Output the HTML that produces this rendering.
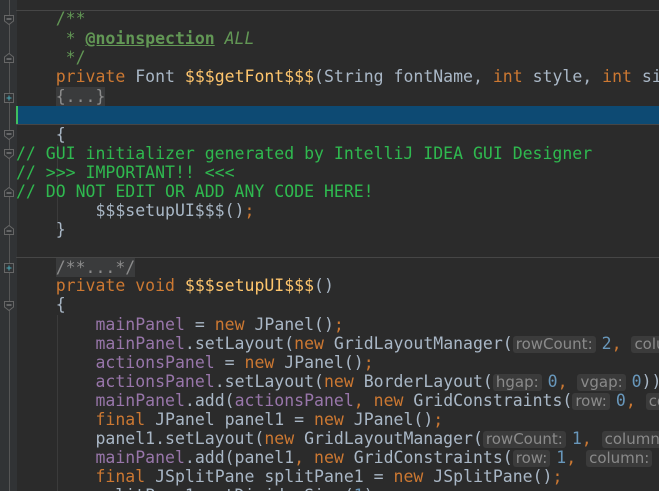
<!DOCTYPE html>
<html style="overflow:hidden;width:659px;height:491px"><head><meta charset="utf-8"><style>
body{margin:0;width:659px;height:491px;overflow:hidden;background:#2b2b2b;position:relative;font-family:"DejaVu Sans Mono","Liberation Mono",monospace;font-size:16.5px;color:#a9b7c6}
.g{position:absolute;left:0;top:0;width:17px;height:491px;background:#313335}
.vl{position:absolute;left:9px;top:0;width:1px;height:491px;background:#555}
.sep{position:absolute;left:16px;right:0;height:1px;background:#464646}
.l{position:absolute;left:16px;right:0;overflow:hidden;height:19px;line-height:19px;white-space:pre}
.k{color:#cc7832}.d{color:#629755}.dt{color:#629755;font-weight:bold;text-decoration:underline}.di{color:#629755;font-style:italic}
.c{color:#2fb94f}.m{color:#ffc66d}.f{color:#9876aa}.n{color:#6897bb}
.fo{background:#3a3b3c;color:#8c8c8c}
.h{display:inline-block;font-family:"DejaVu Sans","Liberation Sans",sans-serif;font-size:15px;line-height:17px;background:#3b3b3b;color:#8a8a8a;border-radius:3px;padding:0 3px;margin-right:6px}
.fm{position:absolute;left:4px;width:10px;height:10px}
</style></head><body>
<div class="g"></div><div class="vl"></div>
<div class="sep" style="top:10px"></div>
<div style="position:absolute;left:17px;right:0;top:106px;height:18px;background:#0d4a73"></div>
<div style="position:absolute;left:16px;top:106px;width:2px;height:18px;background:#3fbf5f"></div>
<div class="sep" style="top:124px"></div>
<div class="sep" style="top:257px"></div>

<svg class="fm" style="top:15px" viewBox="0 0 10 10"><path d="M0.5 0.5H9.5V6L5 9.5L0.5 6Z" fill="#313335" stroke="#666"/><path d="M2.5 4H7.5" stroke="#999"/></svg>
<svg class="fm" style="top:53px" viewBox="0 0 10 10"><path d="M0.5 9.5H9.5V4L5 0.5L0.5 4Z" fill="#313335" stroke="#666"/><path d="M2.5 6H7.5" stroke="#999"/></svg>
<svg class="fm" style="top:93px" viewBox="0 0 10 10"><rect x="0.5" y="0.5" width="9" height="9" fill="#313335" stroke="#666"/><path d="M2.5 5H7.5M5 2.5V7.5" stroke="#4aa8b8"/></svg>
<svg class="fm" style="top:130px" viewBox="0 0 10 10"><path d="M0.5 0.5H9.5V6L5 9.5L0.5 6Z" fill="#313335" stroke="#666"/><path d="M2.5 4H7.5" stroke="#999"/></svg>
<svg class="fm" style="top:149px" viewBox="0 0 10 10"><path d="M0.5 0.5H9.5V6L5 9.5L0.5 6Z" fill="#313335" stroke="#666"/><path d="M2.5 4H7.5" stroke="#999"/></svg>
<svg class="fm" style="top:187px" viewBox="0 0 10 10"><path d="M0.5 9.5H9.5V4L5 0.5L0.5 4Z" fill="#313335" stroke="#666"/><path d="M2.5 6H7.5" stroke="#999"/></svg>
<svg class="fm" style="top:225px" viewBox="0 0 10 10"><path d="M0.5 9.5H9.5V4L5 0.5L0.5 4Z" fill="#313335" stroke="#666"/><path d="M2.5 6H7.5" stroke="#999"/></svg>
<svg class="fm" style="top:263px" viewBox="0 0 10 10"><rect x="0.5" y="0.5" width="9" height="9" fill="#313335" stroke="#666"/><path d="M2.5 5H7.5M5 2.5V7.5" stroke="#4aa8b8"/></svg>
<svg class="fm" style="top:301px" viewBox="0 0 10 10"><path d="M0.5 0.5H9.5V6L5 9.5L0.5 6Z" fill="#313335" stroke="#666"/><path d="M2.5 4H7.5" stroke="#999"/></svg>

<div style="position:absolute;left:57px;top:144px;width:1px;height:85px;background:#3b3b3b"></div>
<div style="position:absolute;left:57px;top:315px;width:1px;height:176px;background:#3b3b3b"></div>

<div class="l" style="top:9px"><span class="d">    /**</span></div>
<div class="l" style="top:29px"><span class="d">     * </span><span class="dt">@noinspection</span><span class="di"> ALL</span></div>
<div class="l" style="top:48px"><span class="d">     */</span></div>
<div class="l" style="top:67px">    <span class="k">private</span> Font <span class="m">$$$getFont$$$</span>(String fontName, <span class="k">int</span> style, <span class="k">int</span> size)</div>
<div class="l" style="top:87px">    <span class="fo">{...}</span></div>
<div class="l" style="top:125px">    {</div>
<div class="l" style="top:144px"><span class="c">// GUI initializer generated by IntelliJ IDEA GUI Designer</span></div>
<div class="l" style="top:163px"><span class="c">// &gt;&gt;&gt; IMPORTANT!! &lt;&lt;&lt;</span></div>
<div class="l" style="top:182px"><span class="c">// DO NOT EDIT OR ADD ANY CODE HERE!</span></div>
<div class="l" style="top:201px">        $$$setupUI$$$()<span class="k">;</span></div>
<div class="l" style="top:220px">    }</div>
<div class="l" style="top:258px">    <span class="fo">/**...*/</span></div>
<div class="l" style="top:276px">    <span class="k">private void</span> <span class="m">$$$setupUI$$$</span>()</div>
<div class="l" style="top:295px">    {</div>
<div class="l" style="top:315px">        <span class="f">mainPanel</span> = <span class="k">new</span> JPanel()<span class="k">;</span></div>
<div class="l" style="top:334px">        <span class="f">mainPanel</span>.setLayout(<span class="k">new</span> GridLayoutManager(<span class="h">rowCount:</span><span class="n">2</span><span class="k">, </span><span class="h">columnCount:</span></div>
<div class="l" style="top:353px">        <span class="f">actionsPanel</span> = <span class="k">new</span> JPanel()<span class="k">;</span></div>
<div class="l" style="top:372px">        <span class="f">actionsPanel</span>.setLayout(<span class="k">new</span> BorderLayout(<span class="h">hgap:</span><span class="n">0</span><span class="k">, </span><span class="h">vgap:</span><span class="n">0</span>))<span class="k">;</span></div>
<div class="l" style="top:391px">        <span class="f">mainPanel</span>.add(<span class="f">actionsPanel</span><span class="k">, new</span> GridConstraints(<span class="h">row:</span><span class="n">0</span><span class="k">, </span><span class="h">column:</span></div>
<div class="l" style="top:410px">        <span class="k">final</span> JPanel panel1 = <span class="k">new</span> JPanel()<span class="k">;</span></div>
<div class="l" style="top:429px">        panel1.setLayout(<span class="k">new</span> GridLayoutManager(<span class="h">rowCount:</span><span class="n">1</span><span class="k">, </span><span class="h">columnCount:</span></div>
<div class="l" style="top:448px">        <span class="f">mainPanel</span>.add(panel1<span class="k">, new</span> GridConstraints(<span class="h">row:</span><span class="n">1</span><span class="k">, </span><span class="h">column:</span></div>
<div class="l" style="top:467px">        <span class="k">final</span> JSplitPane splitPane1 = <span class="k">new</span> JSplitPane()<span class="k">;</span></div>
<div class="l" style="top:486px;height:5px">        splitPane1.setDividerSize(<span class="n">1</span>)<span class="k">;</span></div>
</body></html>
